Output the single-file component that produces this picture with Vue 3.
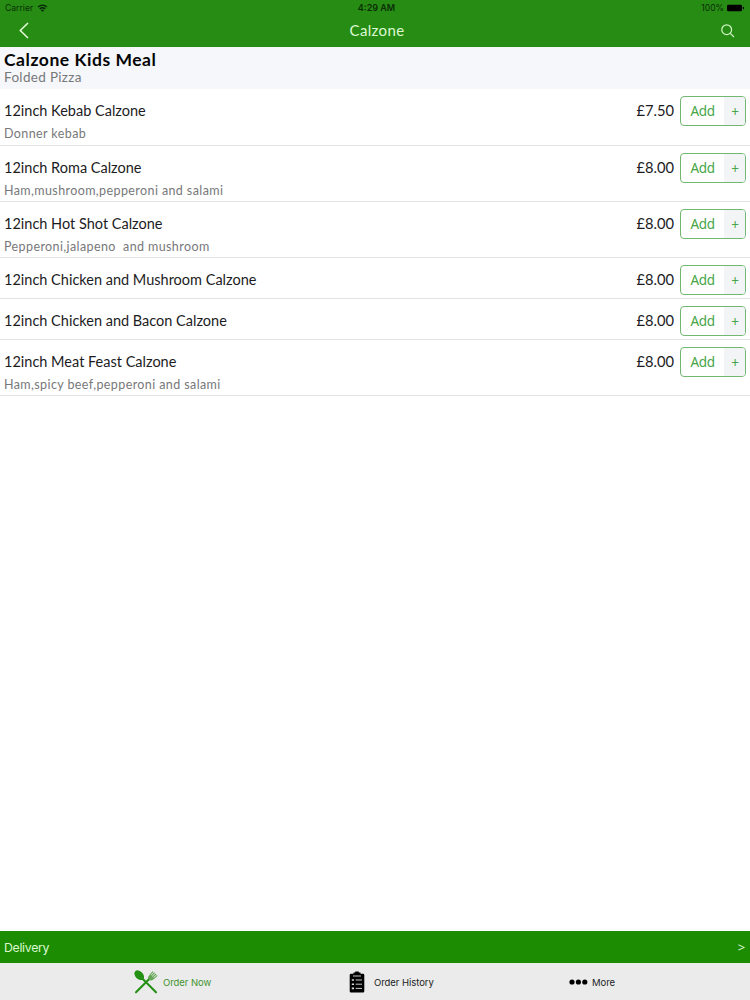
<template>
  <div class="screen">
    <header class="top-bar">
      <div class="status-bar">
        <div class="carrier">
          <span>Carrier</span>
          <svg class="wifi" viewBox="0 0 12 9">
            <path d="M1 3.4Q6-.8 11 3.4M2.9 5.5Q6 3 9.1 5.5" />
            <path class="wifi-dot" d="M4.2 6.9Q6 5.5 7.8 6.9L6 8.8Z" />
          </svg>
        </div>
        <span class="clock">4:29 AM</span>
        <div class="power">
          <span>100%</span>
          <svg class="battery" viewBox="0 0 18 8">
            <rect x="0" y="0.7" width="15" height="6.6" rx="1.2" />
            <rect x="15.8" y="2.7" width="1.2" height="2.6" rx="0.6" />
          </svg>
        </div>
      </div>
      <div class="nav-bar">
        <svg class="back" viewBox="0 0 10 17">
          <path d="M9 1L1.3 8.5L9 16" />
        </svg>
        <h1 class="title">Calzone</h1>
        <svg class="search" viewBox="0 0 14 14">
          <circle cx="5.7" cy="5.7" r="4.9" />
          <path d="M9.3 9.3L13 13" />
        </svg>
      </div>
    </header>

    <section class="category">
      <h2>Calzone Kids Meal</h2>
      <p>Folded Pizza</p>
    </section>

    <ul class="menu">
      <li v-for="item in items" :key="item.name" class="item">
        <div class="item-main">
          <span class="name">{{ item.name }}</span>
          <span class="price">{{ item.price }}</span>
          <button class="add">
            <span class="add-label">Add</span>
            <span class="add-plus">+</span>
          </button>
        </div>
        <p v-if="item.description" class="description">{{ item.description }}</p>
      </li>
    </ul>

    <div class="delivery">
      <span>Delivery</span>
      <span class="arrow">&gt;</span>
    </div>

    <nav class="tabs">
      <a class="tab active">
        <svg class="cutlery" viewBox="0 0 24 24">
          <path class="handle" d="M7.5 7.8L22 22.3M2 22.3L15.5 8.8" />
          <ellipse cx="5.2" cy="5.2" rx="5.6" ry="3.9" transform="rotate(45 5.2 5.2)" />
          <path
            class="fork"
            d="M13.8 8.3C14.3 6 15.7 4.4 18.5 1.2L19.4 2L16.7 5.1L17.1 5.5L20.1 2.3L21 3.1L17.9 6.3L18.4 6.8L21.6 3.6L22.4 4.5L19.3 7.5L19.7 7.9L23 5.1L23.6 5.8C20.5 9 18.8 10.4 16 10.6Z"
          />
        </svg>
        <span class="tab-label">Order Now</span>
      </a>
      <a class="tab history">
        <svg class="clipboard" viewBox="0 0 16 22">
          <path d="M2 2.8H4.5V1.6H6.2V.4H9.8V1.6H11.5V2.8H14Q15.3 2.8 15.3 4.1V20.2Q15.3 21.5 14 21.5H2Q.7 21.5.7 20.2V4.1Q.7 2.8 2 2.8Z" />
          <path class="lines" d="M6.7 9H13M6.7 13.2H13M6.7 17.4H13M4 5H12" />
          <path class="bullets" d="M2.8 9H5M2.8 13.2H5M2.8 17.4H5" />
        </svg>
        <span class="tab-label">Order History</span>
      </a>
      <a class="tab more">
        <svg class="dots" viewBox="0 0 19 6">
          <circle cx="3" cy="3" r="2.6" />
          <circle cx="9.4" cy="3" r="2.6" />
          <circle cx="15.8" cy="3" r="2.6" />
        </svg>
        <span class="tab-label">More</span>
      </a>
    </nav>
  </div>
</template>

<script setup>
import { ref } from "vue";

const items = ref([
  {
    name: "12inch Kebab Calzone",
    price: "£7.50",
    description: "Donner kebab",
  },
  {
    name: "12inch Roma Calzone",
    price: "£8.00",
    description: "Ham,mushroom,pepperoni and salami",
  },
  {
    name: "12inch Hot Shot Calzone",
    price: "£8.00",
    description: "Pepperoni,jalapeno  and mushroom",
  },
  { name: "12inch Chicken and Mushroom Calzone", price: "£8.00" },
  { name: "12inch Chicken and Bacon Calzone", price: "£8.00" },
  {
    name: "12inch Meat Feast Calzone",
    price: "£8.00",
    description: "Ham,spicy beef,pepperoni and salami",
  },
]);
</script>

<style>
body {
  margin: 0;
  background: #fff;
}
</style>

<style scoped>
.screen {
  display: flex;
  flex-direction: column;
  width: 750px;
  height: 1000px;
  overflow: hidden;
  background: #fff;
  color: #1c1c1e;
  font-family: Lato, "Open Sans", sans-serif;
}

h1,
h2,
p,
ul {
  margin: 0;
  padding: 0;
}

svg {
  display: block;
  flex-shrink: 0;
}

.top-bar {
  height: 47px;
  background: #278c14;
}

.status-bar {
  display: grid;
  grid-template-columns: 1fr auto 1fr;
  align-items: center;
  height: 15px;
  padding: 0 5px;
  color: #0b2e05;
  font-family: Inter, sans-serif;
  font-size: 8.6px;
}

.carrier,
.power {
  display: flex;
  align-items: center;
  gap: 4px;
}

.power {
  justify-content: flex-end;
  gap: 3px;
}

.clock {
  padding-left: 3px;
  font-size: 9px;
  font-weight: 600;
}

.wifi {
  width: 11px;
  height: 8px;
  fill: none;
  stroke: #06230a;
  stroke-width: 1.5;
}

.wifi-dot {
  fill: #06230a;
  stroke: none;
}

.battery {
  width: 18px;
  height: 8px;
  fill: #000;
}

.nav-bar {
  display: grid;
  grid-template-columns: 1fr auto 1fr;
  align-items: center;
  height: 31px;
  padding: 0 15px 0 19px;
}

.back {
  width: 10px;
  height: 17px;
  fill: none;
  stroke: #eaffdf;
  stroke-width: 1.5;
}

.title {
  padding-bottom: 2px;
  color: #dcf8d0;
  font-size: 15px;
  font-weight: 400;
  letter-spacing: 0.35px;
}

.search {
  justify-self: end;
  width: 14px;
  height: 14px;
  fill: none;
  stroke: #d2f5c4;
  stroke-width: 1.2;
}

.category {
  box-sizing: border-box;
  height: 42.3px;
  padding: 3px 4px 0;
  background: #f5f7fa;
}

.category h2 {
  color: #050505;
  font-size: 17.5px;
  font-weight: 700;
  line-height: 20px;
  letter-spacing: 0.53px;
}

.category p {
  color: #77787a;
  font-size: 13.5px;
  line-height: 15px;
  letter-spacing: 0.33px;
}

.menu {
  flex: 1;
  list-style: none;
}

.item {
  box-sizing: border-box;
  height: 40.7px;
  padding: 7px 4px 0;
  border-bottom: 1px solid #e3e3e4;
}

.item:has(.description) {
  height: 56.3px;
}

.item-main {
  display: flex;
  align-items: center;
  height: 30px;
}

.name {
  flex: 1;
  padding-bottom: 1px;
  font-size: 14.5px;
}

.price {
  margin-right: 6px;
  padding-bottom: 2px;
  font-size: 14.7px;
}

.add {
  display: flex;
  box-sizing: border-box;
  width: 66px;
  height: 30px;
  padding: 0;
  overflow: hidden;
  border: 1px solid #72b872;
  border-radius: 4px;
  background: #fff;
  color: #46a546;
  font-family: "Noto Sans", sans-serif;
  font-size: 13.5px;
  line-height: 28px;
  letter-spacing: -0.35px;
}

.add-label {
  width: 43px;
}

.add-plus {
  flex: 1;
  padding-left: 1px;
  background: #f2f4f6;
  line-height: 30px;
}

.description {
  color: #77787a;
  font-size: 12.5px;
  line-height: 15px;
  letter-spacing: 0.4px;
  white-space: pre;
}

.delivery {
  display: flex;
  align-items: center;
  justify-content: space-between;
  height: 32px;
  padding: 0 5px 0 4px;
  background: #1c8c03;
  color: #dcf8d0;
  font-family: Inter, sans-serif;
  font-size: 12.3px;
  letter-spacing: -0.3px;
}

.arrow {
  font-family: "Noto Sans", sans-serif;
  font-size: 13px;
}

.tabs {
  display: grid;
  grid-template-columns: 134px 215px 220px 1fr;
  height: 37px;
  background: #ebebeb;
  color: #1c1c1e;
  font-family: Inter, sans-serif;
  font-size: 9.5px;
}

.tab {
  display: flex;
  align-items: center;
}

.tab-label {
  padding-top: 1px;
  letter-spacing: -0.05px;
}

.active {
  grid-column: 2;
  gap: 5px;
  color: #41932f;
}

.history {
  gap: 9px;
}

.more {
  gap: 4px;
}

.cutlery {
  width: 24px;
  height: 24px;
  fill: #249014;
}

.handle {
  fill: none;
  stroke: #249014;
  stroke-width: 2.1;
  stroke-linecap: round;
}

.fork {
  fill: #62a654;
}

.clipboard {
  width: 16px;
  height: 22px;
  fill: #000;
}

.lines {
  stroke: #c8c8c8;
  stroke-width: 1;
}

.bullets {
  stroke: #d8d8d8;
  stroke-width: 1.6;
}

.dots {
  width: 19px;
  height: 6px;
  fill: #000;
}
</style>
